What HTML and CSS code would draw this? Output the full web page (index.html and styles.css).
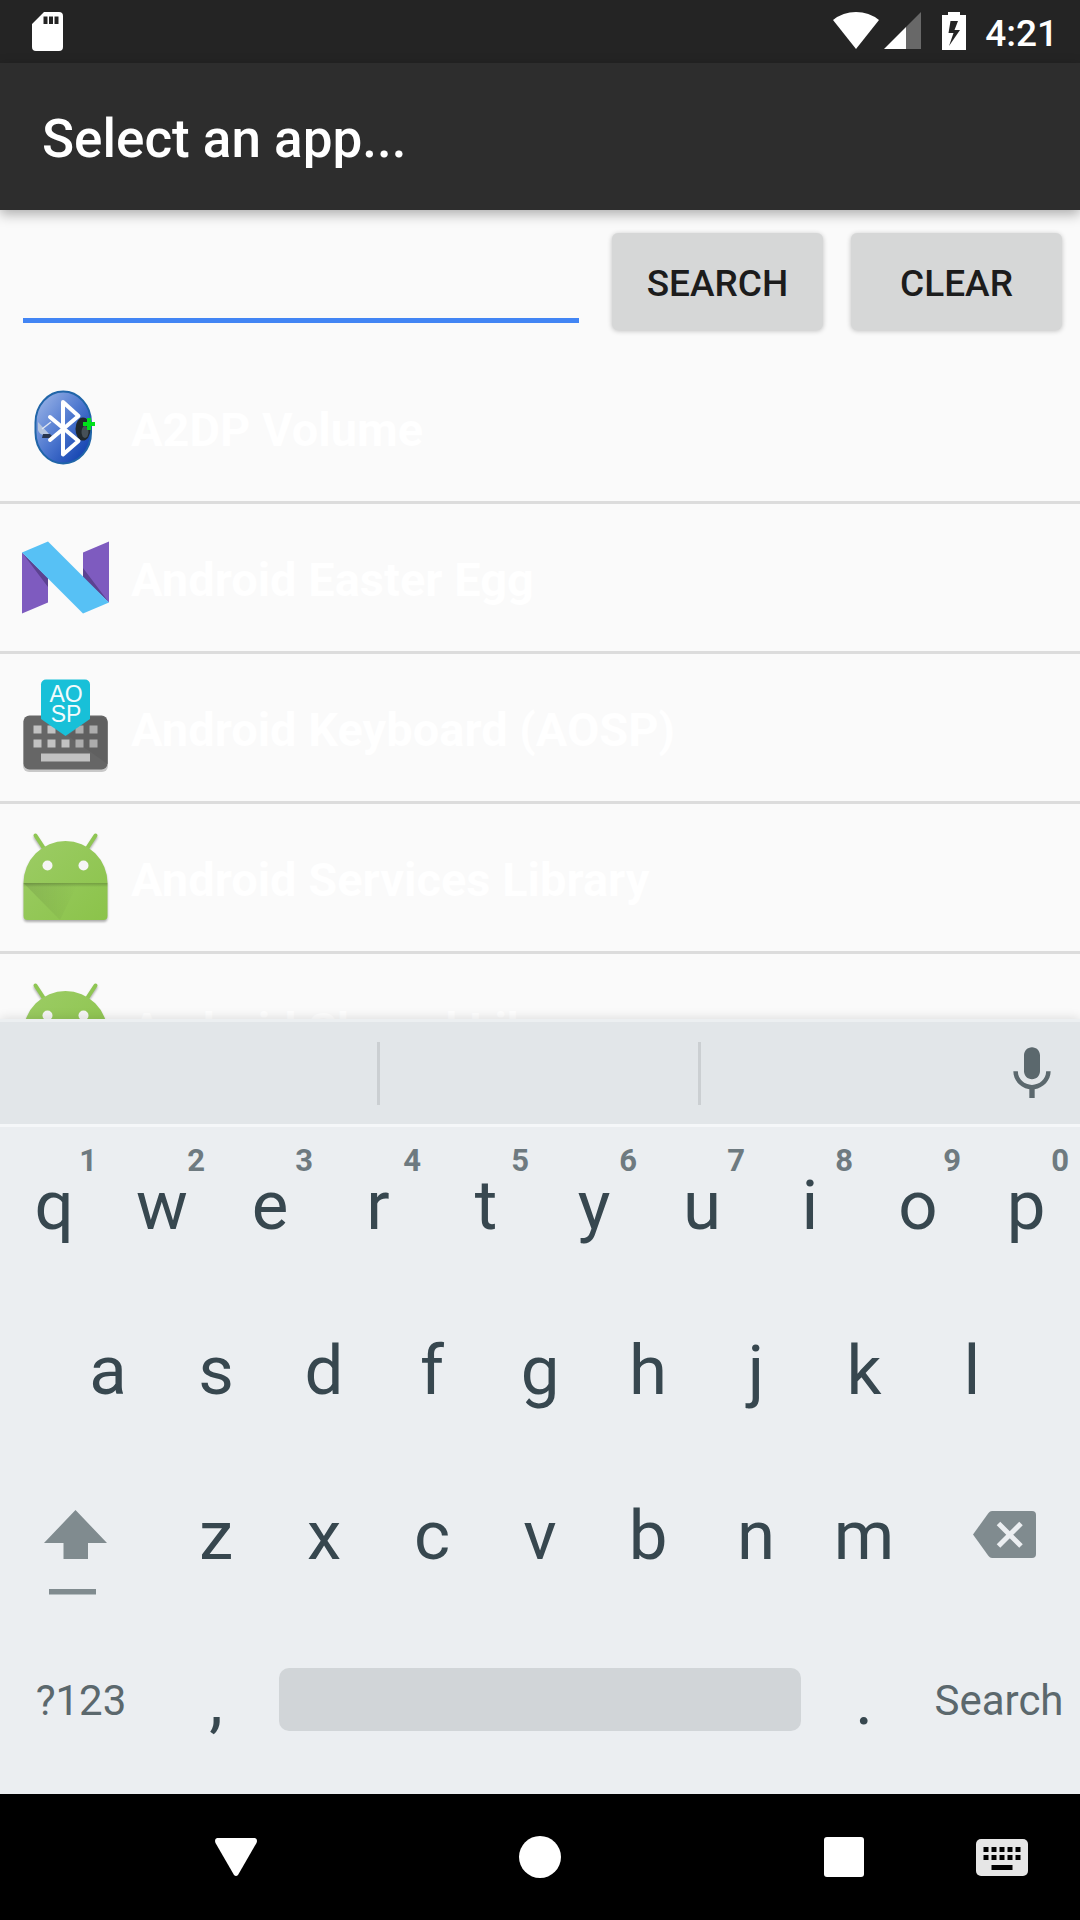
FILE: index.html
```html
<!DOCTYPE html>
<html lang="en">
<head>
<meta charset="utf-8">
<meta name="viewport" content="width=device-width, initial-scale=1">
<title>Select an app...</title>
<link rel="stylesheet" href="styles.css">
</head>
<body class="screen">
<svg class="defs" aria-hidden="true">
  <defs>
    <linearGradient id="bt-fill" x1="0" y1="0" x2="1" y2="1">
      <stop offset="0" stop-color="#a5bcea"/><stop offset=".5" stop-color="#4d77cf"/><stop offset="1" stop-color="#0234a8"/>
    </linearGradient>
    <linearGradient id="droid-fill" x1="0" y1="0" x2="1" y2="1">
      <stop offset="0" stop-color="#9ccc65"/><stop offset="1" stop-color="#8bc34a"/>
    </linearGradient>
    <linearGradient id="droid-fold" x1="0" y1="0" x2="1" y2="0">
      <stop offset="0" stop-color="#000" stop-opacity=".1"/><stop offset="1" stop-color="#000" stop-opacity="0"/>
    </linearGradient>
    <linearGradient id="droid-crease" x1="0" y1="0" x2="0" y2="1">
      <stop offset="0" stop-color="#000" stop-opacity=".2"/><stop offset="1" stop-color="#000" stop-opacity="0"/>
    </linearGradient>
    <symbol id="droid" viewBox="0 0 96 96">
      <path d="M17.500 6.500L27 21M77.500 6.500L68 21" stroke="#8fc653" stroke-width="4" stroke-linecap="round"/>
      <path d="M5.500 54a42 42 0 0 1 84 0V87a4 4 0 0 1-4 4H9.500a4 4 0 0 1-4-4z" fill="url(#droid-fill)"/>
      <path d="M5.500 54H60L42 91z" fill="url(#droid-fold)"/>
      <path d="M5.500 54H89.500V58H5.500z" fill="url(#droid-crease)"/>
      <circle cx="29.500" cy="36.500" r="5" fill="#f5f5f5"/><circle cx="65.500" cy="36.500" r="5" fill="#f5f5f5"/>
    </symbol>
  </defs>
</svg>

<header class="status">
  <svg class="sd" viewBox="0 0 31 39" role="img" aria-label="SD card"><path fill="#fff" fill-rule="evenodd" d="M12 0H27a4 4 0 0 1 4 4V35a4 4 0 0 1-4 4H4a4 4 0 0 1-4-4V12zM11.500 4.500v7.500h4V4.500zM17 4.500v7.500h4V4.500zM22.500 4.500v7.500h4V4.500z"/></svg>
  <svg class="wifi" viewBox="0 0 46 37" role="img" aria-label="Wi-Fi"><path fill="#fff" d="M0 8Q10 0 23 0T46 8L23 37z"/></svg>
  <svg class="signal" viewBox="0 0 37 37" role="img" aria-label="Signal"><path fill="#686868" d="M22 15L37 0V37H22z"/><path fill="#fff" d="M0 37L22 15V37z"/></svg>
  <svg class="battery" viewBox="0 0 24 38" role="img" aria-label="Charging"><path fill="#fff" fill-rule="evenodd" d="M6 0H18V3H24V38H0V3H6zM8.500 9L6.500 21H11.500L7 34L18 18H12.500L16 9z"/></svg>
  <time class="clock">4:21</time>
</header>

<div class="toolbar"><h1 class="title">Select an app...</h1></div>

<main class="content">
  <form class="search">
    <input class="search-input" type="text" aria-label="Search apps">
    <button class="btn" type="button">SEARCH</button>
    <button class="btn" type="button">CLEAR</button>
  </form>
  <ul class="apps">
    <li class="app">
      <svg class="app-icon" viewBox="0 0 96 96" aria-hidden="true">
        <rect x="17.500" y="12.500" width="55.500" height="72" rx="28" ry="31" fill="url(#bt-fill)" stroke="#2065a8" stroke-width="2"/>
        <path d="M20 43L32 56Q22 58 20 51z" fill="#b4c4de"/><path d="M24 50L33 43" stroke="#dfe6f2" stroke-width="1.500"/>
        <path d="M25 55L32 55L34 57V59H24z" fill="#27354f"/>
        <ellipse cx="65" cy="50" rx="7.500" ry="11.500" fill="#20282d"/><ellipse cx="67" cy="53" rx="3.500" ry="6" fill="#465058"/>
        <path d="M32 38L60.500 62L45 75.500V23L60.500 37L32 61" fill="none" stroke="#fff" stroke-width="4" stroke-linecap="round" stroke-linejoin="round"/>
        <path d="M71 39V51M65 45H77" stroke="#00e01a" stroke-width="4"/>
      </svg>
      <span class="app-name">A2DP Volume</span>
    </li>
    <li class="app">
      <svg class="app-icon" viewBox="0 0 96 96" aria-hidden="true">
        <path fill="#7e5bbf" d="M4 23.500L30 49V73.500L4 84.500zM65 23.500L91 12.500V73.500L65 48z"/>
        <path fill="#5c4291" d="M4 23.500L30 49V58zM65 39L91 73.500L65 49z"/>
        <path fill="#57c1f5" d="M4 23.500L30 12.500L91 73.500L65 84.500z"/>
      </svg>
      <span class="app-name">Android Easter Egg</span>
    </li>
    <li class="app">
      <svg class="app-icon" viewBox="0 0 96 96" aria-hidden="true">
        <rect x="5" y="38" width="85" height="55" rx="6" fill="#000" opacity=".2"/>
        <rect x="5.500" y="36.500" width="84" height="54" rx="6" fill="#666"/>
        <path fill="#606060" d="M50 57L72 38H84a5.500 5.500 0 0 1 5.500 5.500V85z"/>
        <path fill="#c2c2c2" d="M15.500 46.500h8v8h-8zM29.500 46.500h8v8h-8zM15.500 60.500h8v8h-8zM29.500 60.500h8v8h-8zM43.500 60.500h8v8h-8zM23 74.500H72v8H23z"/>
        <path fill="#adadad" d="M57.500 46.500h8v8h-8zM71.500 46.500h8v8h-8zM57.500 60.500h8v8h-8zM71.500 60.500h8v8h-8z"/>
        <path fill="#18c0d8" d="M28 0.500H67a5 5 0 0 1 5 5V40L47.500 57L23 40V5.500a5 5 0 0 1 5-5z"/>
        <text class="aosp" x="48" y="23">AO</text><text class="aosp" x="48" y="43">SP</text>
      </svg>
      <span class="app-name">Android Keyboard (AOSP)</span>
    </li>
    <li class="app">
      <svg class="app-icon droid" aria-hidden="true"><use href="#droid"/></svg>
      <span class="app-name">Android Services Library</span>
    </li>
    <li class="app">
      <svg class="app-icon droid" aria-hidden="true"><use href="#droid"/></svg>
      <span class="app-name">Android Shared Library</span>
    </li>
  </ul>
</main>

<section class="keyboard" aria-label="Keyboard">
  <div class="suggestions">
    <span class="suggestion"></span><span class="suggestion"></span>
    <button class="mic" type="button" aria-label="Voice input"><svg class="mic-icon" viewBox="0 0 24 24"><path fill="#5b686d" d="M12 14c1.660 0 3-1.340 3-3V5c0-1.660-1.340-3-3-3S9 3.340 9 5v6c0 1.660 1.340 3 3 3zm5.300-3c0 3-2.540 5.100-5.300 5.100S6.700 14 6.700 11H5c0 3.410 2.720 6.230 6 6.720V21h2v-3.280c3.280-.48 6-3.300 6-6.720z"/></svg></button>
  </div>
  <div class="keys">
    <div class="row row-top">
      <button class="key" type="button">q<span class="hint">1</span></button>
      <button class="key" type="button">w<span class="hint">2</span></button>
      <button class="key" type="button">e<span class="hint">3</span></button>
      <button class="key" type="button">r<span class="hint">4</span></button>
      <button class="key" type="button">t<span class="hint">5</span></button>
      <button class="key" type="button">y<span class="hint">6</span></button>
      <button class="key" type="button">u<span class="hint">7</span></button>
      <button class="key" type="button">i<span class="hint">8</span></button>
      <button class="key" type="button">o<span class="hint">9</span></button>
      <button class="key" type="button">p<span class="hint">0</span></button>
    </div>
    <div class="row row-home">
      <button class="key" type="button">a</button>
      <button class="key" type="button">s</button>
      <button class="key" type="button">d</button>
      <button class="key" type="button">f</button>
      <button class="key" type="button">g</button>
      <button class="key" type="button">h</button>
      <button class="key" type="button">j</button>
      <button class="key" type="button">k</button>
      <button class="key" type="button">l</button>
    </div>
    <div class="row row-bottom">
      <button class="key key-icon" type="button" aria-label="Shift"><svg class="key-art" viewBox="0 0 162 165"><path fill="#808b8f" d="M75.500 53L107 86H88V102H63.500V86H44zM49 132H96V137.500H49z"/></svg></button>
      <button class="key" type="button">z</button>
      <button class="key" type="button">x</button>
      <button class="key" type="button">c</button>
      <button class="key" type="button">v</button>
      <button class="key" type="button">b</button>
      <button class="key" type="button">n</button>
      <button class="key" type="button">m</button>
      <button class="key key-icon" type="button" aria-label="Delete"><svg class="key-art" viewBox="0 0 162 165"><path fill="#808b8f" d="M74 54H114a4 4 0 0 1 4 4V97a4 4 0 0 1-4 4H74Q72 101 70.500 99L55 77.500L70.500 56Q72 54 74 54z"/><path d="M80.500 66.500L103 89M103 66.500L80.500 89" stroke="#ebeef1" stroke-width="5"/></svg></button>
    </div>
    <div class="row row-space">
      <button class="key key-label" type="button">?123</button>
      <button class="key" type="button">,</button>
      <button class="key" type="button" aria-label="Space"><span class="space"></span></button>
      <button class="key" type="button">.</button>
      <button class="key key-label" type="button">Search</button>
    </div>
  </div>
</section>

<nav class="navbar" aria-label="System">
  <button class="nav-btn" type="button" aria-label="Back"><svg class="nav-shape" viewBox="0 0 42 42"><path fill="#fff" d="M2 2H40Q43 3 41.500 7L23 39Q21 41 19 39L0.500 7Q-1 3 2 2z"/></svg></button>
  <button class="nav-btn" type="button" aria-label="Home"><svg class="nav-shape" viewBox="0 0 42 42"><circle cx="21" cy="21" r="21" fill="#fff"/></svg></button>
  <button class="nav-btn" type="button" aria-label="Recent apps"><svg class="nav-shape" viewBox="0 0 42 42"><rect x="1" y="1" width="40" height="40" rx="3" fill="#fff"/></svg></button>
  <button class="nav-btn" type="button" aria-label="Switch keyboard"><svg class="nav-ime" viewBox="0 0 52 37"><rect width="52" height="37" rx="5" fill="#e6e6e6"/><path fill="#000" d="M7.500 8h5v5h-5zM15.500 8h5v5h-5zM23.500 8h5v5h-5zM31.500 8h5v5h-5zM39.500 8h5v5h-5zM7.500 16h5v5h-5zM15.500 16h5v5h-5zM23.500 16h5v5h-5zM31.500 16h5v5h-5zM39.500 16h5v5h-5zM15.500 26h21v5h-21z"/></svg></button>
</nav>
</body>
</html>
```
FILE: styles.css
```css
* { box-sizing: border-box; }

.screen {
  margin: 0;
  height: 100vh;
  display: flex;
  flex-direction: column;
  background: #fafafa;
  font-family: Roboto, "Noto Sans", sans-serif;
}

button, input { font-family: inherit; border: 0; margin: 0; padding: 0; }
svg { display: block; flex: none; }
.defs { position: absolute; width: 0; height: 0; }

/* Status bar */
.status {
  flex: none;
  height: 63px;
  padding: 12px 22px 0 32px;
  display: flex;
  align-items: flex-start;
  background: #242424;
}
.sd { width: 31px; height: 39px; margin-right: auto; }
.wifi { width: 46px; height: 37px; margin-right: 5px; }
.signal { width: 37px; height: 37px; margin-right: 21px; }
.battery { width: 24px; height: 38px; margin-right: 19px; }
.clock { color: #fff; font-size: 37px; font-weight: 500; line-height: 44px; }

/* Toolbar */
.toolbar {
  flex: none;
  height: 147px;
  padding: 4px 42px 0;
  display: flex;
  align-items: center;
  background: #2d2d2d;
  box-shadow: 0 4px 12px rgba(0, 0, 0, .32);
  position: relative;
}
.title { margin: 0; color: #fff; font-size: 53px; font-weight: 500; line-height: 60px; }

/* Search form and list */
.content { flex: 1; min-height: 0; overflow: hidden; }
.search {
  display: flex;
  align-items: flex-start;
  padding: 23px 18px 24px 23px;
}
.search-input {
  flex: 1;
  min-width: 0;
  height: 90px;
  margin-right: 33px;
  background: transparent;
  border-bottom: 5px solid #4285f4;
  font-size: 47px;
  outline: 0;
}
.btn {
  width: 211px;
  height: 97px;
  padding-top: 4px;
  border-radius: 6px;
  background: #d6d7d7;
  color: #1c1c1c;
  font-size: 37px;
  font-weight: 500;
  box-shadow: 0 1px 5px rgba(0, 0, 0, .24);
}
.btn + .btn { margin-left: 28px; }

.apps { margin: 0; padding: 0; list-style: none; }
.app {
  height: 150px;
  padding: 25px 18px 26px;
  display: flex;
  align-items: center;
  gap: 17px;
  border-bottom: 3px solid #dcdcdc;
}
.app-icon { width: 96px; height: 96px; overflow: visible; }
.droid { filter: drop-shadow(0 2px 1px rgba(0, 0, 0, .3)); }
.app-name { padding-top: 6px; color: #fff; font-size: 47px; font-weight: 700; line-height: 56px; white-space: nowrap; }
.aosp { fill: #f3fbfc; font-family: "Liberation Sans", sans-serif; font-size: 23px; text-anchor: middle; }

/* On-screen keyboard */
.keyboard {
  flex: none;
  position: relative;
  background: #ebeef1;
  border-top: 3px solid #eceff1;
  box-shadow: 0 -1px 10px rgba(0, 0, 0, .12);
}
.suggestions {
  display: grid;
  grid-template-columns: 380fr 321fr 379fr;
  align-items: center;
  height: 105px;
  background: #e2e6e9;
  border-bottom: 3px solid #f5f7f9;
}
.suggestion { height: 63px; border-right: 3px solid #cbcfd2; }
.mic { justify-self: end; margin-right: 16px; padding-top: 2px; background: none; }
.mic-icon { width: 64px; height: 64px; }

.keys { padding-bottom: 7px; }
.row { display: grid; height: 165px; }
.row-top { grid-template-columns: repeat(10, 1fr); }
.row-home { grid-template-columns: repeat(9, 1fr); padding: 0 5%; }
.row-bottom { grid-template-columns: 3fr repeat(7, 2fr) 3fr; }
.row-space { grid-template-columns: 3fr 2fr 10fr 2fr 3fr; }
.key {
  position: relative;
  min-width: 0;
  padding-bottom: 8px;
  background: none;
  color: #37474f;
  font-size: 69px;
  line-height: 80px;
}
.key-label { color: #5b686d; font-size: 42px; }
.key-icon { padding: 0; }
.key-art { width: 100%; height: 165px; }
.hint {
  position: absolute;
  top: 18px;
  right: 11px;
  color: #6e7a80;
  font-size: 31px;
  font-weight: 700;
  line-height: 31px;
}
.space { display: block; height: 63px; margin: 0 9px 2px; border-radius: 10px; background: #d1d5d8; }

/* Navigation bar */
.navbar {
  flex: none;
  display: grid;
  grid-template-columns: 160fr 448fr 160fr 156fr;
  height: 126px;
  padding-left: 14.4444%;
  background: #000;
}
.nav-btn { display: flex; align-items: center; justify-content: center; background: none; }
.nav-shape { width: 42px; height: 42px; }
.nav-ime { width: 52px; height: 37px; }
```
